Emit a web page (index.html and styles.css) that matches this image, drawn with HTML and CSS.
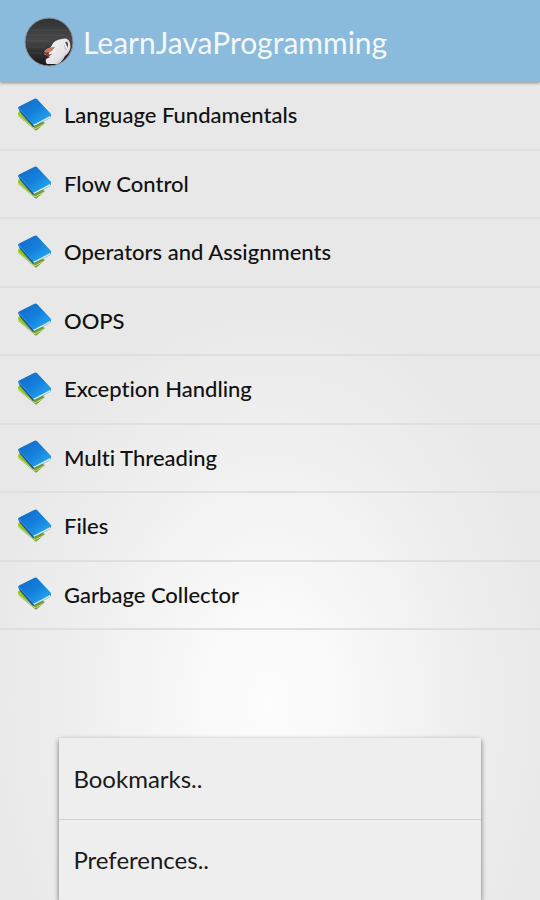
FILE: index.html
```
<!DOCTYPE html>
<html lang="en">
<head>
<meta charset="utf-8">
<meta name="viewport" content="width=device-width, initial-scale=1">
<title>LearnJavaProgramming</title>
<link rel="stylesheet" href="styles.css">
</head>
<body>
<svg class="defs" aria-hidden="true">
  <defs>
    <linearGradient id="cover" x1="0" y1="0" x2="1" y2="1">
      <stop offset="0" stop-color="#1268c4"/>
      <stop offset=".5" stop-color="#1480dc"/>
      <stop offset="1" stop-color="#2bb2f3"/>
    </linearGradient>
    <linearGradient id="green" x1="0" y1="0" x2="1" y2="1">
      <stop offset="0" stop-color="#9fd01c"/>
      <stop offset="1" stop-color="#66912c"/>
    </linearGradient>
    <symbol id="books" viewBox="0 0 35 35">
      <path d="M1 15Q1 14 3 13L28 25 20 32Q19 33 18 32L1 18Z" fill="url(#green)"/>
      <path d="M1 17 18 31 27 26" fill="none" stroke="#c8d79c" stroke-width="1"/>
      <path d="M1 10 3 14 16 29 33 20 34 17 17 24Z" fill="#175b98"/>
      <path d="M16 26 33 17 33 20 17 28Z" fill="#d5e8f3"/>
      <path d="M1 10Q1 9 3 8L17 1Q19 0 20 1L34 16Q35 17 33 18L18 26Q16 27 15 25Z" fill="url(#cover)"/>
      <path d="M2 10 16 26" stroke="#3b92dc" stroke-width="1"/>
    </symbol>
  </defs>
</svg>
<div class="screen">
  <header class="bar">
    <svg class="logo" viewBox="0 0 50 52" aria-hidden="true">
      <defs>
        <linearGradient id="dark" x1="0" y1="0" x2="0" y2="1">
          <stop offset="0" stop-color="#303132"/>
          <stop offset=".45" stop-color="#484849"/>
          <stop offset="1" stop-color="#171719"/>
        </linearGradient>
        <linearGradient id="cup" x1="0" y1="0" x2="1" y2="1">
          <stop offset="0" stop-color="#f4f3f5"/>
          <stop offset=".65" stop-color="#e6e3e8"/>
          <stop offset="1" stop-color="#a9a5ae"/>
        </linearGradient>
        <clipPath id="disc"><circle cx="25" cy="26" r="24"/></clipPath>
      </defs>
      <circle cx="25" cy="26" r="24" fill="url(#dark)"/>
      <g clip-path="url(#disc)">
        <path d="M3 19H40M2 25H28M3 31H22M7 14H42M6 37H18" stroke="#686868" stroke-width="1" opacity=".3"/>
        <path d="M28 29Q30 24 38 23 44 21 46 27 48 35 41 40 38 46 34 48L23 48Q21 46 22 43L26 41 20 38 25 34Z" fill="url(#cup)"/>
        <path d="M41 26Q44 25 44 29 44 32 42 34L40 29Z" fill="#4a474d"/>
        <path d="M40 26 43 33" stroke="#f1eff2" stroke-width="2"/>
        <path d="M20 36Q22 31 31 31L28 35 24 37Z" fill="#cf785f"/>
        <path d="M20 37 24 36 28 38 24 41Z" fill="#823d35"/>
        <path d="M25 38 32 34" stroke="#f5f3f5" stroke-width="2"/>
      </g>
      <circle cx="25" cy="26" r="24" fill="none" stroke="#8b969d" stroke-width="1"/>
    </svg>
    <h1 class="title">LearnJavaProgramming</h1>
  </header>
  <main>
    <ul class="topics">
      <li><a class="topic" href="#fundamentals"><svg class="book" aria-hidden="true"><use href="#books"/></svg>Language Fundamentals</a></li>
      <li><a class="topic" href="#flow"><svg class="book" aria-hidden="true"><use href="#books"/></svg>Flow Control</a></li>
      <li><a class="topic" href="#operators"><svg class="book" aria-hidden="true"><use href="#books"/></svg>Operators and Assignments</a></li>
      <li><a class="topic" href="#oops"><svg class="book" aria-hidden="true"><use href="#books"/></svg>OOPS</a></li>
      <li><a class="topic" href="#exceptions"><svg class="book" aria-hidden="true"><use href="#books"/></svg>Exception Handling</a></li>
      <li><a class="topic" href="#threading"><svg class="book" aria-hidden="true"><use href="#books"/></svg>Multi Threading</a></li>
      <li><a class="topic" href="#files"><svg class="book" aria-hidden="true"><use href="#books"/></svg>Files</a></li>
      <li><a class="topic" href="#garbage"><svg class="book" aria-hidden="true"><use href="#books"/></svg>Garbage Collector</a></li>
    </ul>
  </main>
  <div class="menu">
    <button class="option" type="button">Bookmarks..</button>
    <button class="option" type="button">Preferences..</button>
  </div>
</div>
</body>
</html>
```
FILE: styles.css
```
* {
  box-sizing: border-box;
}

body {
  margin: 0;
  color: #111;
  font-family: Lato, "Open Sans", sans-serif;
  font-variant-ligatures: none;
}

.defs {
  display: block;
  width: 0;
  height: 0;
}

.screen {
  position: relative;
  min-height: 100vh;
  overflow: hidden;
  background: radial-gradient(ellipse 54% 46% at 50% 78%, #fdfdfd 0%, #f9f9f9 25%, #efefef 65%, #e8e8e8 100%);
}

.bar {
  position: relative;
  display: flex;
  align-items: center;
  gap: 9px;
  height: 82px;
  padding: 2px 24px 0;
  background: #8bbbdc;
  box-shadow: 0 1px 3px rgba(0, 0, 0, .4);
}

.logo {
  flex: none;
  width: 50px;
  height: 52px;
}

.title {
  margin: 0;
  color: #f3f8fc;
  font-size: 30px;
  font-weight: 400;
  line-height: 36px;
}

.topics {
  display: grid;
  grid-auto-rows: 1fr;
  height: 548px;
  margin: 0;
  padding: 0;
  list-style: none;
}

.topic {
  display: flex;
  align-items: center;
  gap: 12px;
  height: 100%;
  padding: 0 17px;
  border-bottom: 2px solid #dfdfdf;
  color: inherit;
  font-size: 22px;
  font-weight: 500;
  line-height: 28px;
  text-decoration: none;
}

.book {
  flex: none;
  width: 35px;
  height: 35px;
}

.menu {
  position: absolute;
  right: 11%;
  bottom: 0;
  left: 11%;
  background: #eee;
  box-shadow: 0 2px 5px rgba(0, 0, 0, .55);
}

.option {
  display: block;
  width: 100%;
  height: 81px;
  padding: 0 14px;
  border: 0;
  background: none;
  color: #1a1a1a;
  font: inherit;
  font-size: 24px;
  line-height: 30px;
  text-align: left;
}

.option + .option {
  border-top: 1px solid #d2d2d2;
}
```
